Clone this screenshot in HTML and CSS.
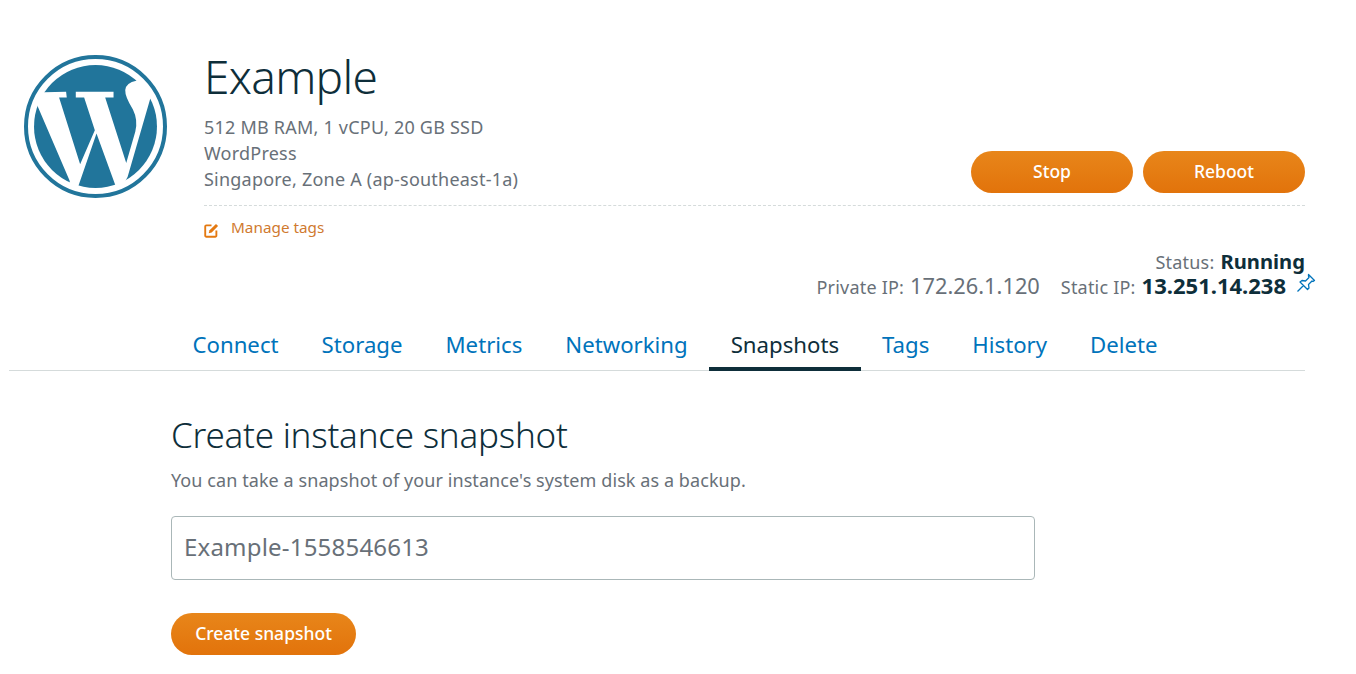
FILE: index.html
```html
<!DOCTYPE html>
<html lang="en">
<head>
<meta charset="utf-8">
<title>Example</title>
<link rel="stylesheet" href="styles.css">
</head>
<body>
<div class="page">
  <header class="head">
    <svg class="logo" viewBox="42 45 428 428" aria-label="WordPress">
      <circle cx="256" cy="259" r="184" fill="#21759b"/>
      <path fill="#fff" d="M70 157L168 155L170 172L147 172L210 372L254 270L222 172L197 172L197 155L310 155L310 172L285 172L348 368L375 275Q384 240 368 208Q344 170 345 150Q348 127 378 122L440 90L445 175L420 175L352 410L318 470L316 436L259 280L205 436L190 470L178 420L78 187L60 187Z"/>
      <circle cx="256" cy="259" r="208" fill="none" stroke="#21759b" stroke-width="12"/>
    </svg>
    <div class="info">
      <div class="top">
        <div class="summary">
          <h1 class="title">Example</h1>
          <p class="meta">512 MB RAM, 1 vCPU, 20 GB SSD</p>
          <p class="meta">WordPress</p>
          <p class="meta">Singapore, Zone A (ap-southeast-1a)</p>
        </div>
        <div class="actions">
          <button class="btn btn-wide">Stop</button>
          <button class="btn btn-wide">Reboot</button>
        </div>
      </div>
      <a class="tags">
        <svg class="tag-icon" viewBox="0 0 16 16"><path d="M8 2.500H2.500A1.200 1.200 0 0 0 1.300 3.700v9.800a1.200 1.200 0 0 0 1.200 1.200H12a1.200 1.200 0 0 0 1.200-1.200V8" fill="none" stroke="#e47911" stroke-width="2"/><path d="M12.800 1l2.200 2.200L8.200 10l-3.200.9.900-3.200z" fill="#e47911"/></svg>
        <span>Manage tags</span>
      </a>
      <div class="status">
        <div class="status-row"><span class="label">Status:</span> <strong>Running</strong></div>
        <div class="status-row ip-row">
          <span class="label">Private IP:</span> <span class="ip">172.26.1.120</span>
          <span class="label static">Static IP:</span> <strong class="ip-strong">13.251.14.238</strong>
          <svg class="pin" viewBox="0 0 20 20"><path d="M12.500 1.500l6 6-1.500 1-1-.5-3.500 3.500.5 3.500-1.500 1.500-3-3-3-3-1.500-1.500L6 7.500l3.500.5L13 4.500l-.5-1.500zM7.500 12.500l-6 6" fill="none" stroke="#0073bb" stroke-width="1.300" stroke-linejoin="round"/></svg>
        </div>
      </div>
    </div>
  </header>
  <nav class="tabs">
    <a class="tab">Connect</a>
    <a class="tab">Storage</a>
    <a class="tab">Metrics</a>
    <a class="tab">Networking</a>
    <a class="tab active">Snapshots</a>
    <a class="tab">Tags</a>
    <a class="tab">History</a>
    <a class="tab">Delete</a>
  </nav>
  <main class="content">
    <h2 class="section-title">Create instance snapshot</h2>
    <p class="section-text">You can take a snapshot of your instance's system disk as a backup.</p>
    <input class="field" type="text" value="Example-1558546613">
    <button class="btn btn-create">Create snapshot</button>
  </main>
</div>
</body>
</html>
```
FILE: styles.css
```css
* { box-sizing: border-box; }
html, body { margin: 0; padding: 0; background: #fff; }
body { font-family: "Noto Sans", "Open Sans", sans-serif; color: #687078; height: 674px; overflow: hidden; }
.page { width: 1296px; margin-left: 9px; }
.head { display: flex; padding: 45px 0 0 15px; height: 316px; }
.logo { width: 143px; height: 143px; margin-top: 10px; flex: none; }
.info { flex: 1; margin-left: 37px; }
.top { display: flex; justify-content: space-between; height: 161px; padding-bottom: 12px; border-bottom: 1px dashed #d5dbdb; }
.title { margin: -1px 0 6px; font-size: 46px; line-height: 64px; font-weight: 300; color: #0e2e3a; letter-spacing: -.7px; }
.meta { margin: 0; font-size: 18px; line-height: 26px; letter-spacing: .22px; }
.actions { display: flex; gap: 10px; align-self: flex-end; }
.btn { border: 0; border-radius: 21px; height: 42px; padding: 0 0 2px; color: #fff; font: 500 17.500px "Noto Sans", sans-serif; background: linear-gradient(#e8861a, #e2730b); }
.btn-wide { width: 162px; }
.tags { display: flex; align-items: center; margin-top: 9px; color: #d07a2f; font-size: 15.300px; line-height: 24px; }
.tag-icon { width: 15px; height: 15px; margin-right: 12px; margin-top: 6px; }
.status { font-size: 18px; margin-top: 9px; }
.status-row { display: flex; justify-content: flex-end; align-items: baseline; gap: 6px; line-height: 26px; }
.status-row strong { font-size: 20.200px; font-weight: 700; color: #0e2e3a; }
.status-row .ip-strong { font-size: 22px; }
.label { letter-spacing: .2px; }
.ip { font-size: 21.800px; }
.static { margin-left: 15px; }
.ip-row { padding-right: 19px; margin-top: -3px; }
.pin { flex: none; width: 20px; height: 20px; margin: 1px -30px 0 4px; align-self: flex-start; }
.tabs { display: flex; padding-left: 162px; height: 46px; border-bottom: 1px solid #d5dbdb; margin-top: 9px; }
.tab { padding: 0 21.500px; height: 46px; line-height: 40px; font-size: 22.200px; color: #0073bb; }
.tab.active { color: #0e2e3a; border-bottom: 4px solid #0e2e3a; }
.content { padding: 36px 0 0 162px; }
.section-title { margin: 0; font-size: 35px; line-height: 56px; font-weight: 300; color: #0e2e3a; letter-spacing: -.23px; }
.section-text { margin: 4px 0 0; font-size: 18px; line-height: 26px; letter-spacing: .08px; }
.field { display: block; width: 864px; height: 64px; margin-top: 23px; padding: 0 12px 3px; border: 1px solid #aab7b8; border-radius: 4px; font: 24px "Noto Sans", sans-serif; letter-spacing: .2px; color: #687078; }
.btn-create { display: block; width: 185px; margin-top: 33px; }
```
